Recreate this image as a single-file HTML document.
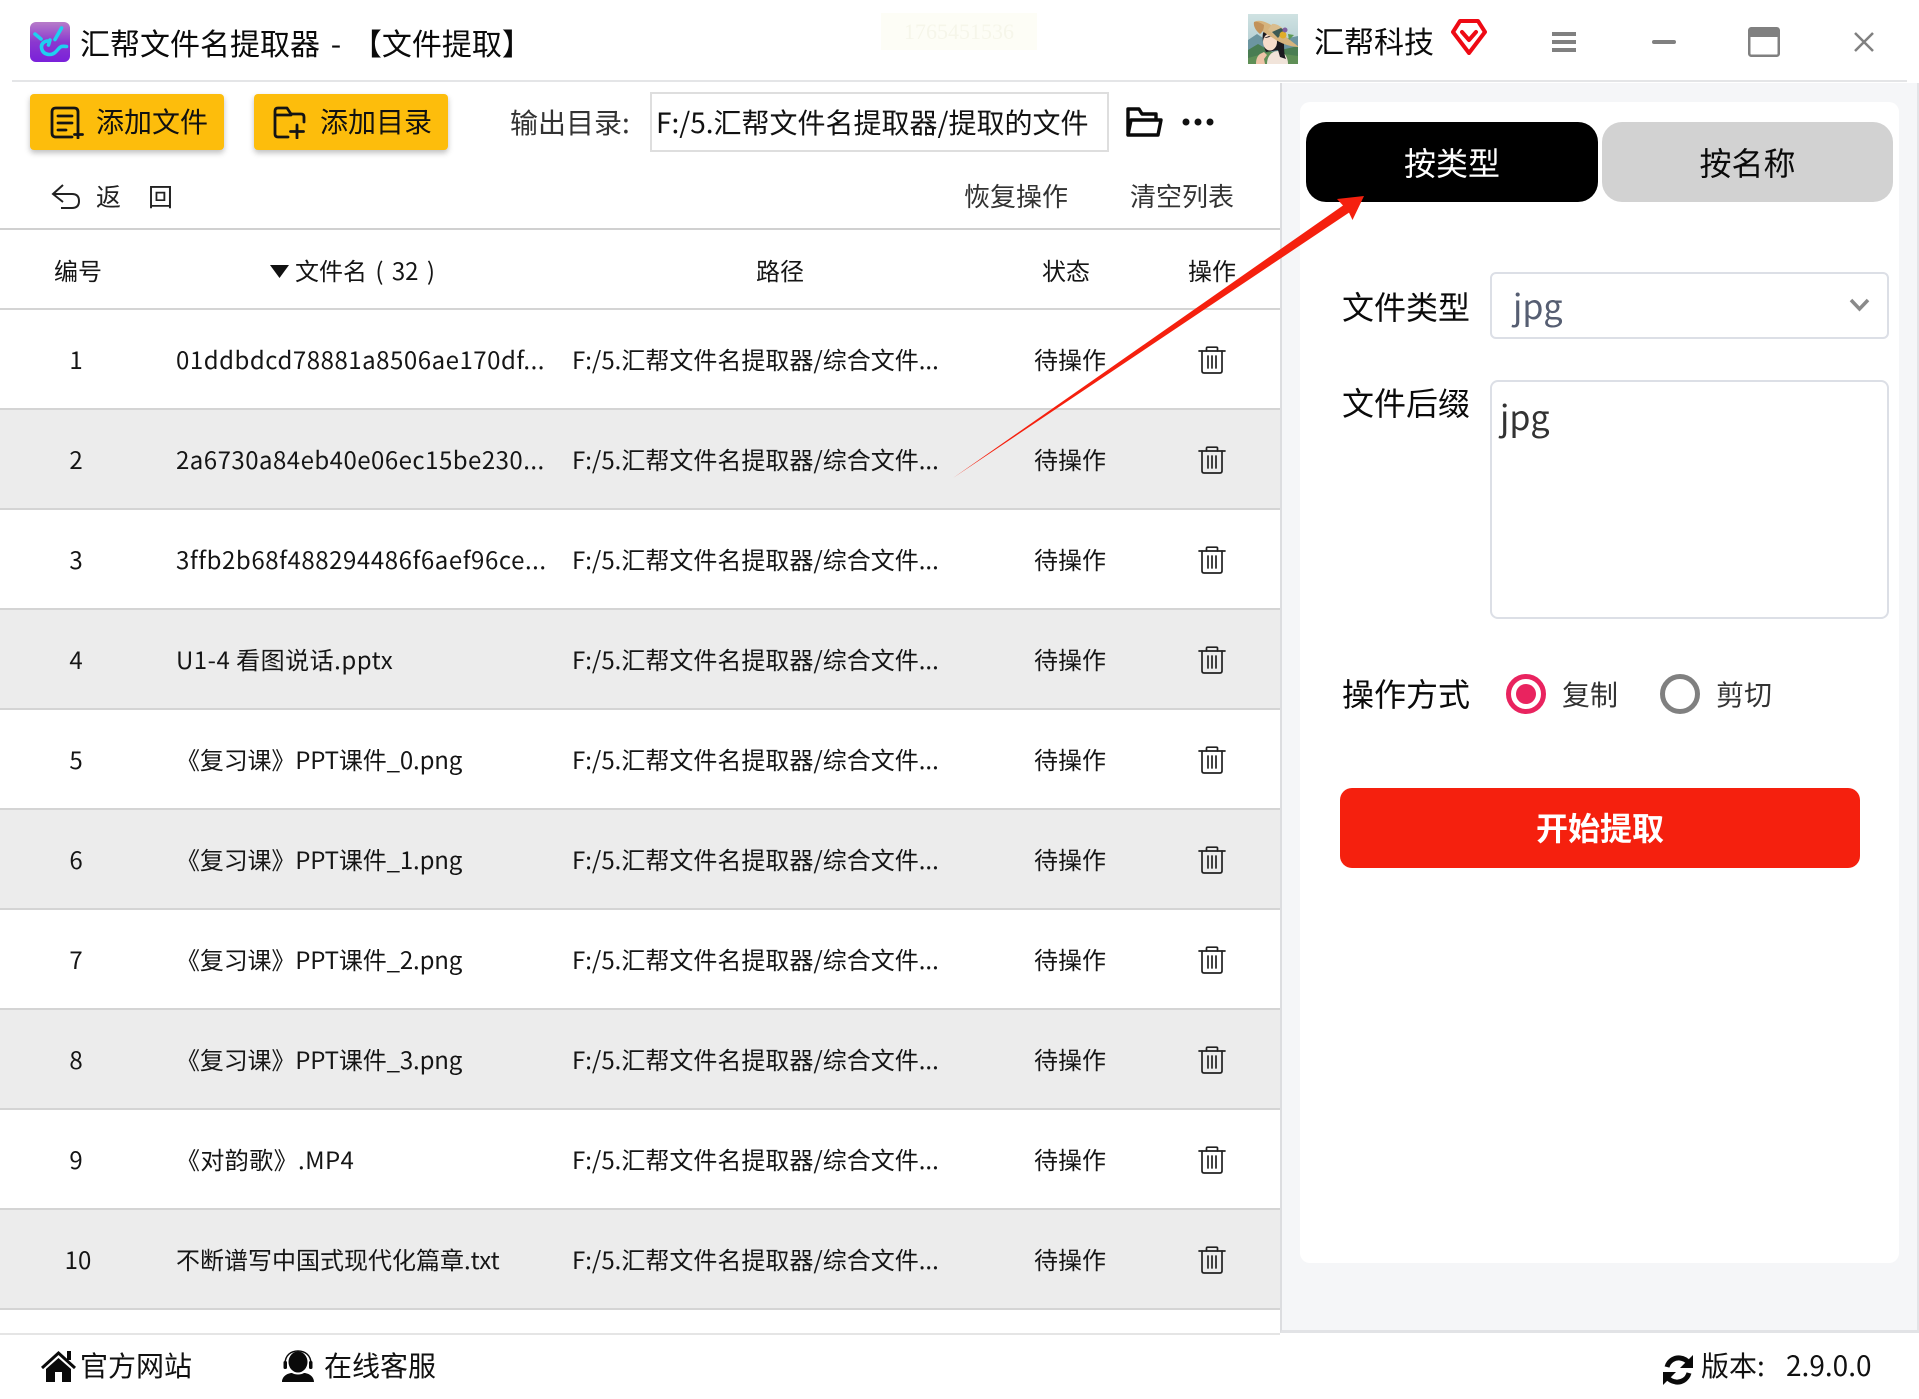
<!DOCTYPE html>
<html lang="zh"><head><meta charset="utf-8"><title>汇帮文件名提取器</title>
<style>
html,body{margin:0;padding:0;background:#fff}
body{width:1919px;height:1399px;position:relative;overflow:hidden;font-family:"Noto Sans CJK SC","Liberation Sans",sans-serif;color:#1a1a1a}
.t{position:absolute;white-space:nowrap}
svg{position:absolute;display:block}
.btn{position:absolute;top:94px;width:194px;height:56px;background:#fdbd0c;border-radius:4px;box-shadow:0 3px 6px rgba(0,0,0,.25)}
.r{position:absolute;left:0;width:1280px;height:100px;border-bottom:2px solid #d4d4d4;box-sizing:border-box;font-size:24px;line-height:98px;color:#151515}
.r span{position:absolute;top:0;white-space:nowrap}
.e{background:#ececec}
.n{left:36px;width:80px;text-align:center}
.f{left:176px}
.p{left:572px}
.s{left:1034px}
.r svg{left:1198px;top:36px}
.h{position:absolute;top:250px;font-size:24px;line-height:40px;color:#151515;white-space:nowrap}
.l{position:absolute;height:2px}
.lab{position:absolute;left:1342px;font-size:32px;line-height:44px;color:#0a0a0a;white-space:nowrap}
</style></head><body>
<svg width="0" height="0" style="position:absolute"><defs>
<symbol id="trash" viewBox="0 0 28 28"><g fill="none" stroke="#222" stroke-width="1.7" stroke-linecap="round" stroke-linejoin="round"><path d="M1 5h26"/><path d="M8.500 5V2.200q0-1 1-1h9q1 0 1 1V5"/><path d="M4 5v20q0 2 2 2h16q2 0 2-2V5"/><path d="M10 10v12M14 10v12M18 10v12"/></g></symbol>
</defs></svg>

<!-- title bar -->
<svg style="left:30px;top:22px" width="40" height="40" viewBox="0 0 40 40"><defs><linearGradient id="lg" x1="0" y1="0" x2="0" y2="1"><stop offset="0" stop-color="#b77cc9"/><stop offset=".5" stop-color="#8b38cf"/><stop offset="1" stop-color="#7a20da"/></linearGradient></defs><rect width="40" height="40" rx="6" fill="url(#lg)"/><g fill="none" stroke="#1fd0f0" stroke-width="3.600" stroke-linecap="round" stroke-linejoin="round"><path d="M5 12l6 5"/><path d="M31.500 6L25 17.500"/><path d="M20 18l-1.500 5"/><path d="M18 19c-4 0-7 3-6.500 6.500C12 30 15 32.500 20 32.500c6 0 8-7 11.500-8 2-.5 4 0 5 0"/></g></svg>
<div class="t" style="left:80px;top:20px;font-size:30px;line-height:44px;color:#0a0a0a;word-spacing:4px">汇帮文件名提取器 - 【文件提取】</div>
<div class="t" style="left:881px;top:13px;width:156px;height:37px;background:#fdfdf6;color:#f6f6ea;font:22px/37px 'Liberation Serif',serif;text-align:center">1765451536</div>
<svg style="left:1248px;top:14px" width="50" height="50" viewBox="0 0 50 50"><defs><linearGradient id="sky" x1="0" y1="0" x2="0" y2="1"><stop offset="0" stop-color="#cfe2e2"/><stop offset=".6" stop-color="#b7d0d4"/></linearGradient></defs><rect width="50" height="50" fill="url(#sky)"/><path d="M0 26l9-6 12 8 29-6v28H0z" fill="#6c95a0"/><path d="M0 36l10-6 14 8 26-6v18H0z" fill="#4a7d52"/><path d="M0 44l22-6 28 4v8H0z" fill="#5f8f56"/><path d="M19 50c0-8 5-13 11-13s10 6 10 13z" fill="#f1e4da"/><path d="M15 19c5-7 17-5 20 4 2 7 0 16 3 22l-6-2-2-7-12 2c-3-7-4-14-3-19z" fill="#1b191f"/><ellipse cx="22" cy="28" rx="7" ry="8.500" fill="#f6dccb"/><path d="M16 24c3 0 8-1 11-5l2 6-8-3z" fill="#1b191f"/><path d="M6 8C12 4 24 10 32 18c6 5 14 11 19 15-8 0-18-3-26-9-8-5-15-9-19-16z" fill="#d6b47e"/><path d="M6 8c-1 4 2 9 6 12 3-2 4-6 4-9-3-2-7-4-10-3z" fill="#c2925a"/><path d="M24 10c4-1 10 3 12 6l-6 8-10-8z" fill="#d9bd8e"/><path d="M24 18l6 6 6-8-3-2z" fill="#3c5a55"/><circle cx="35" cy="21" r="3.500" fill="#e0ad2a"/><circle cx="37" cy="16" r="2.500" fill="#7d5fa0"/><path d="M40 20l6 1-5 5z" fill="#5d9a55"/><path d="M8 50c0-4 1-8 4-10l4-2 3 3-3 4 1 5z" fill="#eec4a8"/></svg>
<div class="t" style="left:1314px;top:18px;font-size:30px;line-height:44px;color:#0a0a0a">汇帮科技</div>
<svg style="left:1451px;top:19px" width="36" height="36" viewBox="0 0 36 36"><path d="M9 2h18l7 11-16 21L2 13z" fill="none" stroke="#ee0a14" stroke-width="4" stroke-linejoin="round"/><path d="M11 13l7 8 7-8" fill="none" stroke="#ee0a14" stroke-width="4" stroke-linecap="round" stroke-linejoin="round"/></svg>
<svg style="left:1552px;top:32px" width="24" height="20" viewBox="0 0 24 20" fill="#808080"><rect width="24" height="4"/><rect y="8" width="24" height="4"/><rect y="16" width="24" height="4"/></svg>
<div class="l" style="left:1652px;top:40px;width:24px;height:4px;background:#808080;border-radius:2px"></div>
<svg style="left:1748px;top:27px" width="32" height="30" viewBox="0 0 32 30"><rect x="1.250" y="1.250" width="29.500" height="27.500" rx="2" fill="none" stroke="#808080" stroke-width="2.500"/><rect x="1" y="1" width="30" height="9" rx="2" fill="#808080"/></svg>
<svg style="left:1854px;top:32px" width="20" height="20" viewBox="0 0 20 20"><path d="M1 1l18 18M19 1L1 19" stroke="#808080" stroke-width="2.500" fill="none"/></svg>
<div class="l" style="left:12px;top:80px;width:1895px;background:#e4e5e7"></div>

<!-- toolbar -->
<div class="btn" style="left:30px"></div>
<svg style="left:50px;top:106px" width="34" height="33" viewBox="0 0 34 33"><g fill="none" stroke="#141414" stroke-width="2.800" stroke-linecap="round"><path d="M22 31H6q-4 0-4-4V6q0-4 4-4h18q4 0 4 4v18"/><path d="M8 10h14M8 17h14M8 24h8"/><path d="M28 25v7M24.500 28.500h8"/></g></svg>
<div class="t" style="left:96px;top:99px;font-size:28px;line-height:44px;color:#111">添加文件</div>
<div class="btn" style="left:254px"></div>
<svg style="left:273px;top:106px" width="34" height="33" viewBox="0 0 34 33"><g fill="none" stroke="#141414" stroke-width="2.800" stroke-linecap="round" stroke-linejoin="round"><path d="M15 31H5q-3 0-3-3V5q0-3 3-3h9l4 6h10q3 0 3 3v5"/><path d="M3 9h15"/><path d="M24 19v13M17.500 25.500h13"/></g></svg>
<div class="t" style="left:320px;top:99px;font-size:28px;line-height:44px;color:#111">添加目录</div>
<div class="t" style="left:510px;top:100px;font-size:28px;line-height:44px;color:#333">输出目录:</div>
<div class="t" style="left:650px;top:92px;width:459px;height:60px;box-sizing:border-box;border:2px solid #dedede;background:#fff"></div>
<div class="t" style="left:656px;top:100px;font-size:28px;line-height:44px;color:#111">F:/5.汇帮文件名提取器/提取的文件</div>
<svg style="left:1126px;top:107px" width="37" height="30" viewBox="0 0 37 30"><g fill="none" stroke="#0a0a0a" stroke-width="3.400" stroke-linejoin="round"><path d="M2 28V2h11l3 5h14v6"/><path d="M2 28l3-15h30l-3 15z"/></g></svg>
<svg style="left:1182px;top:117px" width="32" height="10" viewBox="0 0 32 10" fill="#111"><circle cx="4" cy="5" r="3.500"/><circle cx="16" cy="5" r="3.500"/><circle cx="28" cy="5" r="3.500"/></svg>

<!-- back row -->
<svg style="left:51px;top:183px" width="30" height="27" viewBox="0 0 30 27"><path d="M12 2L2 11l10 8M2 11h19q7 0 7 7t-7 7H10" fill="none" stroke="#222" stroke-width="2"/></svg>
<div class="t" style="left:96px;top:176px;font-size:25px;line-height:40px;color:#222">返</div>
<div class="t" style="left:148px;top:176px;font-size:25px;line-height:40px;color:#222">回</div>
<div class="t" style="left:964px;top:176px;font-size:26px;line-height:40px;color:#333">恢复操作</div>
<div class="t" style="left:1130px;top:176px;font-size:26px;line-height:40px;color:#333">清空列表</div>
<div class="l" style="left:0;top:228px;width:1280px;background:#d0d0d0"></div>

<!-- header -->
<div class="h" style="left:54px">编号</div>
<svg style="left:270px;top:265px" width="19" height="13" viewBox="0 0 19 13"><path d="M0 0h19L9.500 13z" fill="#111"/></svg>
<div class="h" style="left:295px;word-spacing:3px">文件名 ( 32 )</div>
<div class="h" style="left:756px">路径</div>
<div class="h" style="left:1042px">状态</div>
<div class="h" style="left:1188px">操作</div>
<div class="l" style="left:0;top:308px;width:1280px;background:#d4d4d4"></div>

<!-- rows -->
<div class="r" style="top:310px"><span class="n">1</span><span class="f" style="letter-spacing:.53px">01ddbdcd78881a8506ae170df...</span><span class="p">F:/5.汇帮文件名提取器/综合文件...</span><span class="s">待操作</span><svg width="28" height="28"><use href="#trash"/></svg></div>
<div class="r e" style="top:410px"><span class="n">2</span><span class="f" style="letter-spacing:.48px">2a6730a84eb40e06ec15be230...</span><span class="p">F:/5.汇帮文件名提取器/综合文件...</span><span class="s">待操作</span><svg width="28" height="28"><use href="#trash"/></svg></div>
<div class="r" style="top:510px"><span class="n">3</span><span class="f" style="letter-spacing:.57px">3ffb2b68f488294486f6aef96ce...</span><span class="p">F:/5.汇帮文件名提取器/综合文件...</span><span class="s">待操作</span><svg width="28" height="28"><use href="#trash"/></svg></div>
<div class="r e" style="top:610px"><span class="n">4</span><span class="f" style="letter-spacing:.5px">U1-4 看图说话.pptx</span><span class="p">F:/5.汇帮文件名提取器/综合文件...</span><span class="s">待操作</span><svg width="28" height="28"><use href="#trash"/></svg></div>
<div class="r" style="top:710px"><span class="n">5</span><span class="f" style="letter-spacing:-.15px">《复习课》PPT课件_0.png</span><span class="p">F:/5.汇帮文件名提取器/综合文件...</span><span class="s">待操作</span><svg width="28" height="28"><use href="#trash"/></svg></div>
<div class="r e" style="top:810px"><span class="n">6</span><span class="f" style="letter-spacing:-.15px">《复习课》PPT课件_1.png</span><span class="p">F:/5.汇帮文件名提取器/综合文件...</span><span class="s">待操作</span><svg width="28" height="28"><use href="#trash"/></svg></div>
<div class="r" style="top:910px"><span class="n">7</span><span class="f" style="letter-spacing:-.15px">《复习课》PPT课件_2.png</span><span class="p">F:/5.汇帮文件名提取器/综合文件...</span><span class="s">待操作</span><svg width="28" height="28"><use href="#trash"/></svg></div>
<div class="r e" style="top:1010px"><span class="n">8</span><span class="f" style="letter-spacing:-.15px">《复习课》PPT课件_3.png</span><span class="p">F:/5.汇帮文件名提取器/综合文件...</span><span class="s">待操作</span><svg width="28" height="28"><use href="#trash"/></svg></div>
<div class="r" style="top:1110px"><span class="n">9</span><span class="f" style="letter-spacing:.4px">《对韵歌》.MP4</span><span class="p">F:/5.汇帮文件名提取器/综合文件...</span><span class="s">待操作</span><svg width="28" height="28"><use href="#trash"/></svg></div>
<div class="r e" style="top:1210px"><span class="n" style="left:38px">10</span><span class="f">不断谱写中国式现代化篇章.txt</span><span class="p">F:/5.汇帮文件名提取器/综合文件...</span><span class="s">待操作</span><svg width="28" height="28"><use href="#trash"/></svg></div>

<!-- right panel -->
<div class="t" style="left:1280px;top:83px;width:639px;height:1250px;box-sizing:border-box;background:#f5f6f8;border-left:2px solid #dcdde0;border-right:2px solid #e3e4e7;border-bottom:3px solid #e2e3e6"></div>
<div class="t" style="left:1300px;top:102px;width:599px;height:1161px;background:#fff;border-radius:10px"></div>
<div class="t" style="left:1306px;top:122px;width:292px;height:80px;background:#000;border-radius:20px;color:#fff;font-size:32px;line-height:80px;text-align:center">按类型</div>
<div class="t" style="left:1602px;top:122px;width:291px;height:80px;background:#d2d2d2;border-radius:20px;color:#0a0a0a;font-size:32px;line-height:80px;text-align:center">按名称</div>
<div class="lab" style="top:284px">文件类型</div>
<div class="t" style="left:1490px;top:272px;width:399px;height:67px;box-sizing:border-box;border:2px solid #dcdfe6;border-radius:6px;background:#fff"></div>
<div class="t" style="left:1513px;top:283px;font-size:34px;line-height:44px;color:#565e72">jpg</div>
<svg style="left:1849px;top:298px" width="21" height="15" viewBox="0 0 21 15"><path d="M2 2l8.500 9L19 2" fill="none" stroke="#8a8a8a" stroke-width="3.500"/></svg>
<div class="lab" style="top:380px">文件后缀</div>
<div class="t" style="left:1490px;top:380px;width:399px;height:239px;box-sizing:border-box;border:2px solid #dcdfe6;border-radius:8px;background:#fff"></div>
<div class="t" style="left:1500px;top:394px;font-size:34px;line-height:44px;color:#333">jpg</div>
<div class="lab" style="top:671px">操作方式</div>
<div class="t" style="left:1506px;top:674px;width:40px;height:40px;box-sizing:border-box;border:5px solid #e9235f;border-radius:50%;background:#fff"></div>
<div class="t" style="left:1516px;top:684px;width:20px;height:20px;border-radius:50%;background:#e9235f"></div>
<div class="t" style="left:1562px;top:673px;font-size:28px;line-height:42px;color:#333">复制</div>
<div class="t" style="left:1660px;top:674px;width:40px;height:40px;box-sizing:border-box;border:5px solid #808080;border-radius:50%;background:#fff"></div>
<div class="t" style="left:1716px;top:673px;font-size:28px;line-height:42px;color:#333">剪切</div>
<div class="t" style="left:1340px;top:788px;width:520px;height:80px;background:#f5200e;border-radius:12px;color:#fff;font-size:32px;font-weight:bold;line-height:78px;text-align:center">开始提取</div>

<!-- arrow -->
<svg style="left:0;top:0" width="1919" height="600" viewBox="0 0 1919 600"><polygon points="953,478 1343,205.500 1337,199 1364,196 1352.500,220 1349,212.600" fill="#f5200e"/></svg>

<!-- footer -->
<div class="l" style="left:0;top:1333px;width:1280px;background:#e5e5e5"></div>
<svg style="left:41px;top:1350px" width="35" height="32" viewBox="0 0 35 32"><path d="M17.500 8L5 19v13h9v-10h7v10h9V19z" fill="#0a0a0a"/><path d="M1 18L17.500 3 34 18" fill="none" stroke="#0a0a0a" stroke-width="3"/><rect x="26" y="1" width="4" height="9" fill="#0a0a0a"/></svg>
<div class="t" style="left:80px;top:1344px;font-size:28px;line-height:42px;color:#111">官方网站</div>
<svg style="left:282px;top:1350px" width="32" height="32" viewBox="0 0 32 32"><ellipse cx="16" cy="12" rx="9.500" ry="10.500" fill="#0a0a0a"/><path d="M3 14C3 5 9 1 16 1s13 4 13 13" fill="none" stroke="#0a0a0a" stroke-width="1.500"/><rect x="1.500" y="11" width="3.500" height="8" rx="1.500" fill="#0a0a0a"/><rect x="27" y="11" width="3.500" height="8" rx="1.500" fill="#0a0a0a"/><path d="M0 32c0-6 6-9 10-9 3 2 9 2 12 0 4 0 10 3 10 9z" fill="#0a0a0a"/></svg>
<div class="t" style="left:324px;top:1344px;font-size:28px;line-height:42px;color:#111">在线客服</div>
<svg style="left:1663px;top:1354px" width="30" height="32" viewBox="0 0 30 32"><g fill="none" stroke="#0a0a0a" stroke-width="5"><path d="M4 13C6 6 12 3.500 17 4c4 .5 7 2.500 9 5"/><path d="M26 19c-2 7-8 9.500-13 9-4-.5-7-2.500-9-5"/></g><path d="M30 1v13H17z" fill="#0a0a0a"/><path d="M0 31V18h13z" fill="#0a0a0a"/></svg>
<div class="t" style="left:1701px;top:1344px;font-size:28px;line-height:42px;color:#111">版本:</div>
<div class="t" style="left:1786px;top:1344px;font-size:28px;line-height:42px;color:#111">2.9.0.0</div>
</body></html>
